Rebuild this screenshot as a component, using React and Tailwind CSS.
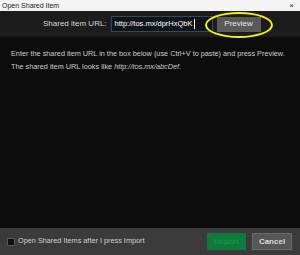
import React from 'react';

const App = () => {
  return (
    <div className="w-[300px] h-[255px] flex flex-col bg-[#0c0c0c] overflow-hidden" style={{ fontFamily: '"Liberation Sans", Arial, sans-serif' }}>
      {/* Title bar */}
      <div className="h-[11px] bg-[#f4f4f4] flex items-center justify-between pl-[2px] pr-[6px] text-[#222]">
        <span className="text-[7px] leading-none">Open Shared Item</span>
        <span className="text-[8px] leading-none">×</span>
      </div>

      {/* URL bar */}
      <div className="h-[26px] bg-[#1c1c1c] flex items-center relative">
        <span className="text-[8px] text-[#d8d8d8] ml-[43px]">Shared item URL:</span>
        <div className="ml-[4px] w-[102px] h-[16px] border border-[#2f4a5e] bg-[#101418] flex items-center px-[3px]">
          <span className="text-[7.5px] text-white leading-none">http://tos.mx/dprHxQbK</span>
          <span className="w-px h-[10px] bg-white ml-px" />
        </div>
        <div className="relative ml-[4px]">
          <button className="w-[44px] h-[15px] bg-[#5a5a5a] text-[8px] text-[#e8e8e8] flex items-center justify-center">
            Preview
          </button>
          <div className="absolute -left-[12px] -top-[5px] w-[68px] h-[26px] rounded-[50%] border-2 border-[#f5ee1a]" />
        </div>
      </div>

      {/* Body */}
      <div className="flex-1 px-[11px] pt-[10px] text-[7.3px] leading-[13px] text-[#cccccc] whitespace-nowrap">
        <p>Enter the shared item URL in the box below (use Ctrl+V to paste) and press Preview.</p>
        <p>
          The shared item URL looks like <i>http://tos.mx/abcDef</i>.
        </p>
      </div>

      {/* Footer */}
      <div className="h-[27px] bg-[#3b3b3b] flex items-center pl-[7px] pr-[8px]">
        <div className="w-[8px] h-[8px] bg-[#111] border border-[#555]" />
        <span className="ml-[3px] text-[7.3px] text-[#cfcfcf]">Open Shared Items after I press Import</span>
        <div className="ml-auto flex gap-[6px]">
          <button className="w-[39px] h-[17px] bg-[#0e7a3e] text-[8px] font-bold text-[#1f8c4e]">Import</button>
          <button className="w-[40px] h-[17px] bg-[#565656] border border-[#6a6a6a] text-[8px] font-bold text-[#dcdcdc]">Cancel</button>
        </div>
      </div>
    </div>
  );
};

export default App;
